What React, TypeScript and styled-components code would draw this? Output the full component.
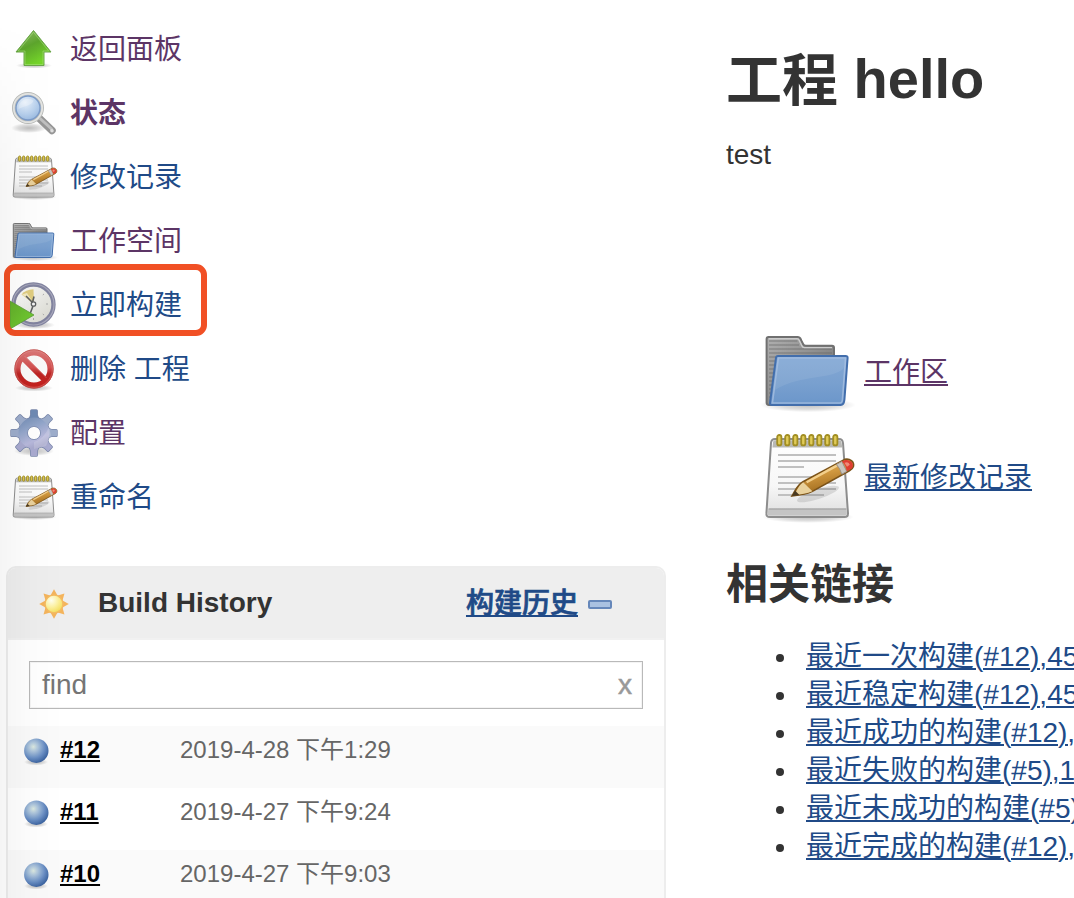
import React, { useId } from "react";
import styled, { createGlobalStyle } from "styled-components";

const GlobalStyle = createGlobalStyle`
  * { box-sizing: border-box; }
  body {
    margin: 0;
    background: #fff;
    color: #333;
    font: 28px/38px "Liberation Sans", "Noto Sans CJK SC", sans-serif;
    overflow: hidden;
  }
`;

const BLUE = "#204a87";
const VISITED = "#5c3566";

const Page = styled.div`
  position: relative;
  display: flex;
  width: 1074px;
  height: 898px;
  overflow: hidden;
`;

const EdgeShade = styled.div`
  position: absolute;
  left: 0;
  top: 0;
  bottom: 0;
  width: 64px;
  pointer-events: none;
  background: linear-gradient(to right, rgba(0, 0, 0, 0.04), rgba(0, 0, 0, 0.012) 50%, rgba(0, 0, 0, 0));
  mask-image: linear-gradient(to bottom, transparent 20px, #000 190px);
`;

const Side = styled.aside`
  flex: 0 0 666px;
  padding: 17px 0 0 6px;
`;

const TaskList = styled.nav`
  display: flex;
  flex-direction: column;
  padding-left: 4px;
`;

const Task = styled.a<{ $visited?: boolean; $bold?: boolean }>`
  position: relative;
  display: flex;
  align-items: center;
  gap: 12px;
  height: 64px;
  color: ${(p) => (p.$visited ? VISITED : BLUE)};
  font-weight: ${(p) => (p.$bold ? 700 : 400)};
`;

const TaskLabel = styled.span`
  padding-top: 1px;
`;

const Highlight = styled.span`
  position: absolute;
  left: -6px;
  top: -9px;
  width: 203px;
  height: 72px;
  border: 6px solid #f15025;
  border-radius: 11px;
`;

const Panel = styled.section`
  width: 660px;
  margin-top: 37px;
  border: 2px solid #ededed;
  border-radius: 10px 10px 0 0;
  background: #fff;
`;

const PanelHeader = styled.header`
  display: flex;
  align-items: center;
  height: 72px;
  padding: 0 52px 0 30px;
  background: #eee;
  border-bottom: 2px solid #f1f1f1;
  border-radius: 8px 8px 0 0;
  font-weight: 700;
`;

const PanelTitle = styled.span`
  flex: 1;
  margin-left: 28px;
`;

const TrendLink = styled.a`
  margin-right: 10px;
  padding-top: 2px;
  color: ${BLUE};
  font-weight: 500;
  -webkit-text-stroke: 0.7px ${BLUE};
  text-decoration: underline;
  text-decoration-thickness: 2px;
  text-underline-offset: 2px;
`;

const SearchBox = styled.div`
  display: flex;
  align-items: center;
  justify-content: space-between;
  height: 48px;
  margin: 21px 21px 17px;
  padding: 0 10px 0 12px;
  border: 1px solid #b9b9b9;
  box-shadow: inset 0 0 0 1px #f4f4f4;
  color: #757575;
`;

const ClearMark = styled.span`
  color: #999;
  -webkit-text-stroke: 0.5px #999;
  font-size: 28px;
`;

const BuildRow = styled.div<{ $odd: boolean }>`
  display: flex;
  align-items: flex-start;
  height: 62px;
  padding: 5px 0 0 14px;
  background: ${(p) => (p.$odd ? "#fafafa" : "#fff")};
  font-size: 24px;
`;

const BallSlot = styled.span`
  width: 32px;
  padding-top: 4px;
  margin-left: -2px;
`;

const BuildNumber = styled.a`
  width: 120px;
  margin-left: 8px;
  color: #000;
  font-weight: 700;
  text-decoration: underline;
  text-decoration-thickness: 2px;
  text-underline-offset: 2px;
`;

const BuildDate = styled.span`
  color: #666;
`;

const Main = styled.main`
  flex: 0 0 408px;
  padding: 47px 0 0 60px;
  white-space: nowrap;
`;

const Title = styled.h1`
  height: 64px;
  margin: 0;
  font-size: 56px;
  line-height: 64px;
`;

const TitleKind = styled.span`
  vertical-align: -2px;
  line-height: 1;
`;

const Description = styled.div`
  margin-top: 25px;
`;

const Shortcuts = styled.div`
  display: flex;
  flex-direction: column;
  gap: 9px;
  margin: 150px 0 0 34px;
`;

const Shortcut = styled.div`
  display: flex;
  align-items: center;
  gap: 8px;
  height: 96px;
`;

const Link = styled.a<{ $visited?: boolean }>`
  color: ${(p) => (p.$visited ? VISITED : BLUE)};
  text-decoration: underline;
  text-decoration-thickness: 2px;
  text-underline-offset: 2px;
`;

const ShortcutLink = styled(Link)`
  padding-top: 2px;
`;

const Subtitle = styled.h2`
  margin: 35px 0 0;
  font-size: 42px;
  line-height: 50px;
`;

const Links = styled.ul`
  margin: 28px 0 0;
  padding: 0;
  list-style: none;
`;

const LinkItem = styled.li`
  display: flex;
  align-items: center;
  height: 38px;
  padding-left: 50px;
  &::before {
    content: "";
    flex: 0 0 8px;
    height: 8px;
    margin: 1px 22px 0 0;
    border-radius: 50%;
    background: #333;
  }
`;

const Svg = styled.svg<{ $size: number }>`
  display: block;
  flex: none;
  width: ${(p) => p.$size}px;
  height: ${(p) => p.$size}px;
`;

interface IconProps {
  size?: number;
}

function Shadow({ id, cx = 24, cy = 43, rx = 18, ry = 4 }: { id: string; cx?: number; cy?: number; rx?: number; ry?: number }) {
  return (
    <>
      <radialGradient id={id}>
        <stop offset="0" stopOpacity=".25" />
        <stop offset=".6" stopOpacity=".13" />
        <stop offset="1" stopOpacity="0" />
      </radialGradient>
      <ellipse cx={cx} cy={cy} rx={rx} ry={ry} fill={`url(#${id})`} />
    </>
  );
}

function UpIcon({ size = 48 }: IconProps) {
  const id = useId();
  return (
    <Svg $size={size} viewBox="0 0 48 48">
      <Shadow id={id + "s"} cy={40.5} rx={18} ry={3} />
      <linearGradient id={id + "g"} x1="0" y1="0" x2=".5" y2="1">
        <stop offset="0" stopColor="#95bd70" />
        <stop offset=".5" stopColor="#5ca42c" />
        <stop offset="1" stopColor="#75d52a" />
      </linearGradient>
      <path d="M23.5 5.5 41 27H34v13.5H14V27H6z" fill={`url(#${id}g)`} stroke="#6aa548" strokeLinejoin="round" />
      <path d="M23.5 7.3 38.7 26H33v13.5H15V26H8.2z" fill="none" stroke="#b0e587" strokeOpacity=".5" />
    </Svg>
  );
}

function SearchIcon({ size = 48 }: IconProps) {
  const id = useId();
  return (
    <Svg $size={size} viewBox="0 0 48 48">
      <Shadow id={id + "s"} cx={19} cy={39} rx={18} ry={5} />
      <radialGradient id={id + "g"} cx=".4" cy=".3" r=".75">
        <stop offset="0" stopColor="#e6f0fb" />
        <stop offset=".55" stopColor="#b9d1ed" />
        <stop offset="1" stopColor="#8fb2dc" />
      </radialGradient>
      <path d="m29.500 29.500 12.500 12" stroke="#969696" strokeWidth="7.500" strokeLinecap="round" />
      <path d="m28.500 28 13 12" stroke="#c0c0c0" strokeWidth="3" strokeLinecap="round" />
      <circle cx="42" cy="41.800" r="1.800" fill="#dedede" />
      <circle cx="18" cy="19" r="14.200" fill={`url(#${id}g)`} stroke="#b9bbb8" strokeWidth="3.600" />
      <circle cx="18" cy="19" r="14.200" fill="none" stroke="#e4e5e3" strokeWidth="1.800" />
      <circle cx="18" cy="19" r="12" fill="none" stroke="#7c9bc8" strokeWidth="1.300" />
      <path d="M8.500 20a9.700 9.700 0 0 1 15-8.600c-1 5-9 5.300-15 8.600" fill="#fff" opacity=".3" />
    </Svg>
  );
}

function NotepadIcon({ size = 48 }: IconProps) {
  const id = useId();
  const lines = [13, 16, 19, 24, 27, 30, 33];
  return (
    <Svg $size={size} viewBox="0 0 48 48">
      <Shadow id={id + "s"} cy={44} rx={23} ry={3} />
      <linearGradient id={id + "p"} x1="0" y1="0" x2="0" y2="1">
        <stop offset="0" stopColor="#fff" />
        <stop offset=".6" stopColor="#f7f7f7" />
        <stop offset="1" stopColor="#dedede" />
      </linearGradient>
      <linearGradient id={id + "w"} x1="0" y1="0" x2=".35" y2="1">
        <stop offset="0" stopColor="#e6b765" />
        <stop offset=".5" stopColor="#d0983f" />
        <stop offset="1" stopColor="#9c671b" />
      </linearGradient>
      <path d="M7.500 5h32q1.800 0 2 2L44 42.200q0 1.800-1.800 1.800H5q-2 0-1.800-1.800L5.500 7q.2-2 2-2z" fill={`url(#${id}p)`} stroke="#8d8d8d" />
      <path d="M7.400 5.600h32.200q1 0 1.200 1.200l.3 2.500H6.200l.3-2.500q0-1.200.9-1.200z" fill="#b9b9b5" />
      <path d="M4.200 40h39l.2 2q0 1.300-1.200 1.300H5q-1.300 0-1.100-1.300z" fill="#c4c4c4" />
      <path d="M4.300 40h38.900" stroke="#aaa" strokeWidth=".7" />
      {lines.map((y) => (
        <path key={y} d={`M9 ${y}H${y === 19 ? 22 : y === 33 ? 32 : 38}`} stroke="#c0c0c0" />
      ))}
      {[0, 1, 2, 3, 4, 5, 6, 7].map((i) => (
        <rect key={i} x={8.6 + i * 4} y="3" width="2.100" height="5.200" rx="1" fill="#e0cb58" stroke="#a28e22" strokeWidth=".9" />
      ))}
      <ellipse cx="29" cy="32.500" rx="11" ry="2.500" transform="rotate(-18 29 32.5)" fill="#555" opacity=".17" />
      <path d="M16 33.500c1.700-2.800 2.500-5.300 5.500-7.100L42.300 15.200c2.600-.6 5 1 4.400 3.600-.3 1-1 1.600-2 2.100L26.200 31.200c-2.600 1.300-6.500 1.900-10.200 2.300z" fill={`url(#${id}w)`} stroke="#7b5319" strokeWidth=".8" />
      <path d="m21.600 26.600 4.600 4.500c-2.600 1.300-5.700 1.400-9 1.900 1.400-2.600 2.200-4.800 4.400-6.400z" fill="#e9d19c" />
      <path d="M23.300 26.600 38.400 18.300" stroke="#f3cf8b" strokeWidth="1.200" />
      <path d="m38.200 17.700 2.700-1.500 2.500 5-2.500 1.400q-.9-3-2.700-4.900z" fill="#c9c5be" stroke="#9c9185" strokeWidth=".5" />
      <path d="m40.900 16.200 1.600-.7c3-.4 4.800 1.700 3.600 4.100l-2.700 1.500q-.3-3-2.500-4.900z" fill="#df3e32" />
      <path d="M42.200 16.900q2.200-1 2.700 1l-1.400 1z" fill="#f08a78" />
      <path d="m16 33.500 1.500-2.700 2.200 2.200z" fill="#493a22" />
    </Svg>
  );
}

function FolderIcon({ size = 48 }: IconProps) {
  const id = useId();
  return (
    <Svg $size={size} viewBox="0 0 48 48">
      <Shadow id={id + "s"} cy={40.5} rx={24} ry={3.6} />
      <linearGradient id={id + "b"} x1="0" y1="0" x2="1" y2="1">
        <stop offset="0" stopColor="#b0b0b0" />
        <stop offset="1" stopColor="#6a6a6a" />
      </linearGradient>
      <linearGradient id={id + "f"} x1="0" y1="0" x2="0" y2="1">
        <stop offset="0" stopColor="#83a8d5" />
        <stop offset=".55" stopColor="#79a0cf" />
        <stop offset="1" stopColor="#6b96ca" />
      </linearGradient>
      <path d="M4.300 6.500h14.400c1.200 0 1.500.3 1.800 1.500l1.100 2.100q.3.800 1.300.8H36q1 0 1 1V40.500H4.500q-1.200 0-1.200-1.200V7.500q0-1 1-1z" fill={`url(#${id}b)`} stroke="#707070" />
      <path d="M4.500 8.500h14.200M4.500 10.500h15M4.500 12.500h31.500M4.500 14.500h31.500M4.500 16.500h4M4.500 18.500h3.500M4.500 20.500h3.500M4.500 22.500h3M4.500 24.500h3M4.500 26.500h3M4.500 28.500h2.500M4.500 30.500h2.500M4.500 32.500h2M4.500 34.500h2M4.500 36.500h1.500" stroke="#666" strokeWidth=".8" opacity=".45" />
      <path d="M4.400 7.400h14.100q.9 0 1.100.8l1.300 2.700q.3.900 1.300.9H36" fill="none" stroke="#ccc" strokeWidth=".7" />
      <path d="M9 16h33.800q1.100 0 1 1L42.200 38q-.3 2.500-1.800 2.500H6q-1.200 0-1-1.200L8 17q.1-1 1-1z" fill={`url(#${id}f)`} stroke="#426eac" />
      <path d="M9.200 17H42.800L41.200 38q-.2 1.500-1.200 1.500H6.200z" fill="none" stroke="#b8cce7" strokeWidth=".8" opacity=".6" />
      <path d="M9.500 17.500h33L41.900 22C37 28 20 25 7.500 33z" fill="#fff" opacity=".08" />
    </Svg>
  );
}

function ClockIcon({ size = 48 }: IconProps) {
  const id = useId();
  return (
    <Svg $size={size} viewBox="0 0 48 48">
      <Shadow id={id + "s"} cx={25} cy={44} rx={20} ry={4} />
      <linearGradient id={id + "g"} x1="0" y1="0" x2="1" y2="1">
        <stop offset="0" stopColor="#fff" />
        <stop offset="1" stopColor="#d5d5cc" />
      </linearGradient>
      <linearGradient id={id + "t"} x1="0" y1="0" x2="1" y2="1">
        <stop offset="0" stopColor="#62ad2b" />
        <stop offset="1" stopColor="#74d132" />
      </linearGradient>
      <circle cx="23.500" cy="23.500" r="20" fill={`url(#${id}g)`} stroke="#8284a0" strokeWidth="4.300" />
      <circle cx="23.500" cy="23.500" r="20.500" fill="none" stroke="#a8a8bc" strokeWidth="1.100" />
      <path d="M24 23 11.500 13.500q4-5 12-5.200z" fill="#e0cd80" />
      <path d="m24 23-12-9.500L17 12z" fill="#f2e9bf" />
      <path d="m16 15 6.500 6.500 1.500-6M23 25l-3 8" fill="none" stroke="#5e6062" strokeWidth="1.600" />
      <circle cx="23.500" cy="23" r="2.200" fill="#f5f5f5" stroke="#5e6062" strokeWidth="1.300" />
      <path d="M36 23h2M23.500 37v2M34 13l-1.200 1M34 34l-1.200-1" stroke="#aaa" />
      <path d="M0 20 24 34 0 48z" fill={`url(#${id}t)`} stroke="#5b9c38" strokeWidth=".8" />
    </Svg>
  );
}

function StopIcon({ size = 48 }: IconProps) {
  const id = useId();
  return (
    <Svg $size={size} viewBox="0 0 48 48">
      <Shadow id={id + "s"} cy={43} rx={19} ry={3.5} />
      <linearGradient id={id + "g"} gradientUnits="userSpaceOnUse" x1="0" y1="4" x2="0" y2="44">
        <stop offset="0" stopColor="#db7c7c" />
        <stop offset=".46" stopColor="#d35151" />
        <stop offset=".62" stopColor="#bd2524" />
        <stop offset="1" stopColor="#c7211e" />
      </linearGradient>
      <circle cx="24" cy="24" r="15" fill="#fafafa" />
      <g fill="none" stroke={`url(#${id}g)`} strokeWidth="6">
        <circle cx="24" cy="24" r="16.500" />
        <path d="m12.500 12.500 23 23" />
      </g>
      <circle cx="24" cy="24" r="19.200" fill="none" stroke="#c04f4b" strokeWidth=".8" />
      <circle cx="24" cy="24" r="18.300" fill="none" stroke="#eea19a" strokeWidth=".7" opacity=".5" />
      <path d="m14.500 11 22 22" stroke="#e9aaa8" strokeWidth=".8" opacity=".4" />
    </Svg>
  );
}

const SPOKES = [0, 45, 90, 135, 180, 225, 270, 315];
const TOOTH = "M18.500 12 20.800 6V1.800q0-.8.800-.8h4.800q.8 0 .8.800V6l2.300 6z";

function GearIcon({ size = 48 }: IconProps) {
  const id = useId();
  return (
    <Svg $size={size} viewBox="0 0 48 48">
      <Shadow id={id + "s"} cy={42} rx={20} ry={5} />
      <linearGradient id={id + "g"} gradientUnits="userSpaceOnUse" x1="14" y1="2" x2="34" y2="46">
        <stop offset="0" stopColor="#6884ad" />
        <stop offset=".38" stopColor="#93a6ca" />
        <stop offset=".65" stopColor="#b8b9dc" />
        <stop offset="1" stopColor="#8f8fb4" />
      </linearGradient>
      <mask id={id + "m"}>
        <rect width="48" height="48" fill="#fff" />
        <circle cx="24" cy="24" r="6.300" fill="#000" />
      </mask>
      <g mask={`url(#${id}m)`}>
        <g fill="#7a88ab" stroke="#7a88ab" strokeWidth="1.400">
          <circle cx="24" cy="24" r="15.500" />
          {SPOKES.map((a) => (
            <path key={a} d={TOOTH} transform={`rotate(${a} 24 24)`} />
          ))}
        </g>
        {SPOKES.map((a) => (
          <path
            key={a}
            d={TOOTH}
            transform={`rotate(${a} 24 24)`}
            fill={a === 0 ? "#6f8ab4" : a > 90 && a < 270 ? "#a9abd0" : "#9dadcb"}
          />
        ))}
        <circle cx="24" cy="24" r="15.500" fill={`url(#${id}g)`} />
        <path d="M24 33q10-3 15-15l2 8-5 11-12 3z" fill="#fff" opacity=".18" />
      </g>
      <circle cx="24" cy="24" r="6.600" fill="none" stroke="#8795b8" />
    </Svg>
  );
}

function SunIcon({ size = 32 }: IconProps) {
  const id = useId();
  return (
    <Svg $size={size} viewBox="0 0 32 32">
      <radialGradient id={id} cx=".35" cy=".3" r=".75">
        <stop offset="0" stopColor="#fffff0" />
        <stop offset=".5" stopColor="#fcf1a0" />
        <stop offset="1" stopColor="#f3dc55" />
      </radialGradient>
      {SPOKES.map((a) => (
        <path key={a} d="M16 2.200 19.800 9h-7.600z" fill="#f4b45c" transform={`rotate(${a} 16 17)`} />
      ))}
      <circle cx="16" cy="17" r="9" fill={`url(#${id})`} stroke="#f4ba62" strokeWidth="1.500" />
    </Svg>
  );
}

function BallIcon() {
  const id = useId();
  return (
    <Svg $size={32} viewBox="0 0 32 32">
      <Shadow id={id + "s"} cx={16} cy={27} rx={12} ry={3.5} />
      <radialGradient id={id} cx=".38" cy=".34" r=".7">
        <stop offset="0" stopColor="#dce9e0" />
        <stop offset=".25" stopColor="#b0c7dc" />
        <stop offset=".65" stopColor="#6b90c5" />
        <stop offset="1" stopColor="#375f9d" />
      </radialGradient>
      <circle cx="16.300" cy="15.700" r="12.200" fill={`url(#${id})`} />
    </Svg>
  );
}

const CollapseIcon = styled.span`
  width: 24px;
  height: 9px;
  margin-top: 2px;
  border: 2px solid #6587ba;
  border-radius: 2px;
  background: #a9c1e1;
`;

const tasks = [
  { label: "返回面板", Icon: UpIcon, visited: true },
  { label: "状态", Icon: SearchIcon, visited: true, bold: true },
  { label: "修改记录", Icon: NotepadIcon },
  { label: "工作空间", Icon: FolderIcon, visited: true },
  { label: "立即构建", Icon: ClockIcon, highlighted: true },
  { label: "删除 工程", Icon: StopIcon },
  { label: "配置", Icon: GearIcon, visited: true },
  { label: "重命名", Icon: NotepadIcon },
];

const builds = [
  { number: "#12", date: "2019-4-28 下午1:29" },
  { number: "#11", date: "2019-4-27 下午9:24" },
  { number: "#10", date: "2019-4-27 下午9:03" },
];

const permalinks = [
  "最近一次构建(#12),45",
  "最近稳定构建(#12),45",
  "最近成功的构建(#12),",
  "最近失败的构建(#5),1",
  "最近未成功的构建(#5)",
  "最近完成的构建(#12),",
];

export default function App() {
  return (
    <>
      <GlobalStyle />
      <Page>
        <Side>
          <TaskList>
            {tasks.map(({ label, Icon, visited, bold, highlighted }) => (
              <Task key={label} $visited={visited} $bold={bold}>
                <Icon />
                <TaskLabel>{label}</TaskLabel>
                {highlighted && <Highlight />}
              </Task>
            ))}
          </TaskList>
          <Panel>
            <PanelHeader>
              <SunIcon />
              <PanelTitle>Build History</PanelTitle>
              <TrendLink>构建历史</TrendLink>
              <CollapseIcon />
            </PanelHeader>
            <SearchBox>
              <span>find</span>
              <ClearMark>x</ClearMark>
            </SearchBox>
            {builds.map((b, i) => (
              <BuildRow key={b.number} $odd={i % 2 === 0}>
                <BallSlot>
                  <BallIcon />
                </BallSlot>
                <BuildNumber>{b.number}</BuildNumber>
                <BuildDate>{b.date}</BuildDate>
              </BuildRow>
            ))}
          </Panel>
        </Side>
        <Main>
          <Title>
            <TitleKind>工程</TitleKind> hello
          </Title>
          <Description>test</Description>
          <Shortcuts>
            <Shortcut>
              <FolderIcon size={96} />
              <ShortcutLink $visited>工作区</ShortcutLink>
            </Shortcut>
            <Shortcut>
              <NotepadIcon size={96} />
              <ShortcutLink>最新修改记录</ShortcutLink>
            </Shortcut>
          </Shortcuts>
          <Subtitle>相关链接</Subtitle>
          <Links>
            {permalinks.map((text) => (
              <LinkItem key={text}>
                <Link>{text}</Link>
              </LinkItem>
            ))}
          </Links>
        </Main>
        <EdgeShade />
      </Page>
    </>
  );
}
